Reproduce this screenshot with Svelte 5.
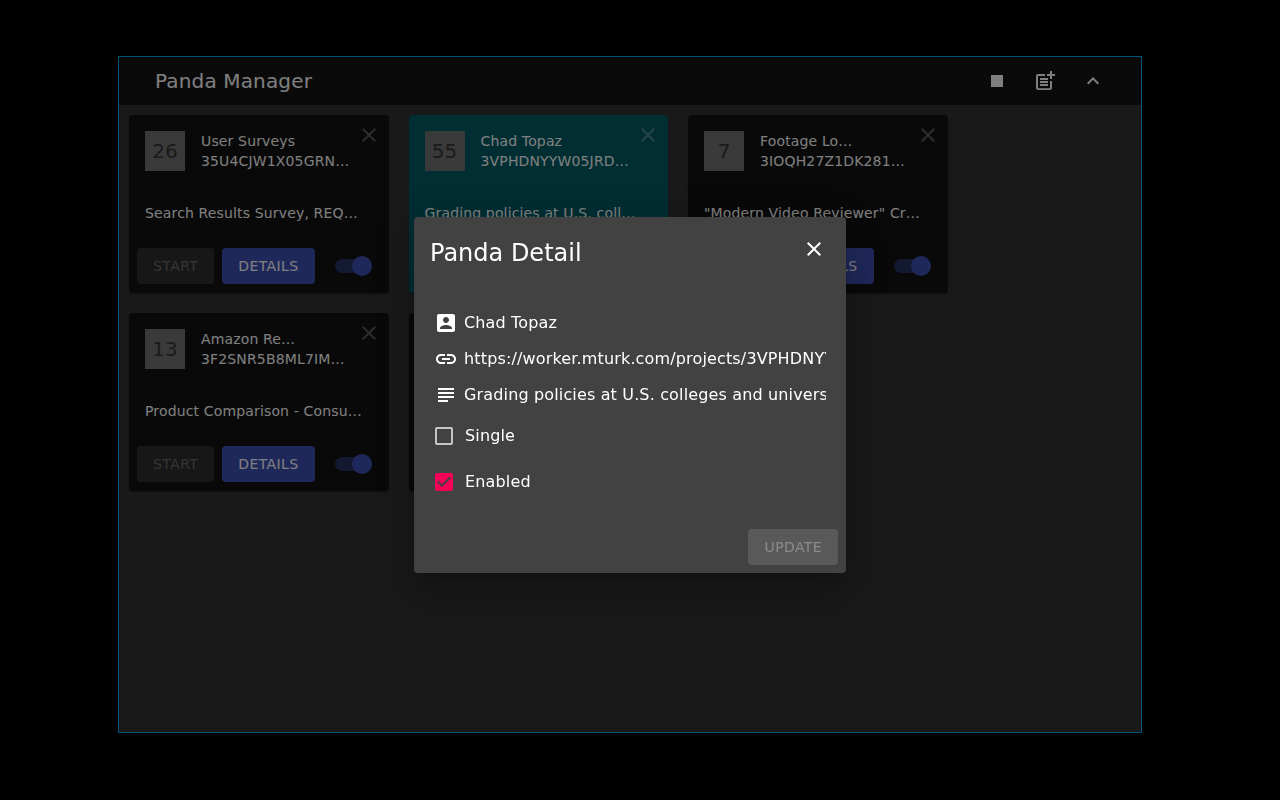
<script>
  const close = 'M19 6.41L17.59 5 12 10.59 6.41 5 5 6.41 10.59 12 5 17.59 6.41 19 12 13.41 17.59 19 19 17.59 13.41 12z';
  const pandas = [
    { count: 26, name: 'User Surveys', id: '35U4CJW1X05GRN…', title: 'Search Results Survey, REQ…' },
    { count: 55, name: 'Chad Topaz', id: '3VPHDNYYW05JRD…', title: 'Grading policies at U.S. coll…', active: true },
    { count: 7, name: 'Footage Lo…', id: '3IOQH27Z1DK281…', title: '"Modern Video Reviewer" Cr…' },
    { count: 13, name: 'Amazon Re…', id: '3F2SNR5B8ML7IM…', title: 'Product Comparison - Consu…' },
    {}
  ];
  const fields = [
    { text: 'Chad Topaz', icon: 'M3 5v14c0 1.1.89 2 2 2h14c1.1 0 2-.9 2-2V5c0-1.1-.9-2-2-2H5c-1.11 0-2 .9-2 2zm12 4c0 1.66-1.34 3-3 3s-3-1.34-3-3 1.34-3 3-3 3 1.34 3 3zm-9 8c0-2 4-3.1 6-3.1s6 1.1 6 3.1v1H6v-1z' },
    { text: 'https://worker.mturk.com/projects/3VPHDNYYW05JRD', icon: 'M3.9 12c0-1.71 1.39-3.1 3.1-3.1h4V7H7c-2.76 0-5 2.24-5 5s2.24 5 5 5h4v-1.9H7c-1.71 0-3.1-1.39-3.1-3.1zM8 13h8v-2H8v2zm9-6h-4v1.9h4c1.71 0 3.1 1.39 3.1 3.1s-1.39 3.1-3.1 3.1h-4V17h4c2.76 0 5-2.24 5-5s-2.24-5-5-5z' },
    { text: 'Grading policies at U.S. colleges and universities', icon: 'M4 5h16v2H4zm0 4h16v2H4zm0 4h16v2H4zm0 4h10v2H4z' }
  ];
</script>

<div class="window">
  <header>
    <h1>Panda Manager</h1>
    <div class="tools">
      <svg viewBox="0 0 24 24"><path d="M6 6h12v12H6z" /></svg>
      <svg viewBox="0 0 24 24"><path d="M17 19.22H5V7h7V5H5c-1.1 0-2 .9-2 2v12c0 1.1.9 2 2 2h12c1.1 0 2-.9 2-2v-7h-2v7.22z" /><path d="M19 2h-2v3h-3c.01.01 0 2 0 2h3v2.99c.01.01 2 0 2 0V7h3V5h-3V2zM7 9h8v2H7zM7 12v2h8v-2H7zM7 15h8v2H7z" /></svg>
      <svg viewBox="0 0 24 24"><path d="M7.41 15.41L12 10.83l4.59 4.58L18 14l-6-6-6 6z" /></svg>
    </div>
  </header>
  <main>
    {#each pandas as p}
      <article class:active={p.active}>
        {#if p.name}
          <div class="head">
            <div class="avatar">{p.count}</div>
            <div class="names"><div>{p.name}</div><div>{p.id}</div></div>
            <svg class="remove" viewBox="0 0 24 24"><path d={close} /></svg>
          </div>
          <p>{p.title}</p>
          <div class="actions">
            <button class="btn disabled" disabled>START</button>
            <button class="btn primary">DETAILS</button>
            <span class="switch"><i></i></span>
          </div>
        {/if}
      </article>
    {/each}
  </main>
</div>

<div class="backdrop">
  <section class="dialog">
    <div class="dialog-title">
      <h2>Panda Detail</h2>
      <svg viewBox="0 0 24 24"><path d={close} /></svg>
    </div>
    <div class="content">
      {#each fields as f}
        <div class="field"><svg viewBox="0 0 24 24"><path d={f.icon} /></svg><span>{f.text}</span></div>
      {/each}
      <div class="check">
        <svg class="off" viewBox="0 0 24 24"><path d="M19 5v14H5V5h14m0-2H5c-1.1 0-2 .9-2 2v14c0 1.1.9 2 2 2h14c1.1 0 2-.9 2-2V5c0-1.1-.9-2-2-2z" /></svg>
        <span>Single</span>
      </div>
      <div class="check">
        <svg class="on" viewBox="0 0 24 24"><path d="M19 3H5c-1.11 0-2 .9-2 2v14c0 1.1.89 2 2 2h14c1.11 0 2-.9 2-2V5c0-1.1-.89-2-2-2zm-9 14l-5-5 1.41-1.41L10 14.17l7.59-7.59L19 8l-9 9z" /></svg>
        <span>Enabled</span>
      </div>
    </div>
    <footer><button class="btn disabled" disabled>UPDATE</button></footer>
  </section>
</div>

<style>
  :global(body) { background: #000; overflow: hidden; }
  :global(#app) { font-family: "DejaVu Sans", sans-serif; color: #fff; }
  * { box-sizing: border-box; }
  h1, h2, p { margin: 0; font-weight: 400; }
  svg { width: 24px; height: 24px; fill: currentColor; flex: none; display: block; }
  .window { width: 1024px; height: 677px; margin: 56px 0 0 118px; border: 1px solid #00a8f4; background: #333; overflow: hidden; }
  header { height: 48px; background: #141414; display: flex; align-items: center; justify-content: space-between; padding: 0 36px; }
  h1 { font-size: 20px; line-height: 32px; letter-spacing: 0.0075em; }
  .tools { display: flex; gap: 24px; }
  main { display: grid; grid-template-columns: repeat(3, 259.5px); grid-auto-rows: 178px; gap: 20px; padding: 10px; }
  article { background: #121212; border-radius: 4px; overflow: hidden; box-shadow: 0 2px 1px -1px rgba(0,0,0,.2), 0 1px 1px rgba(0,0,0,.14), 0 1px 3px rgba(0,0,0,.12); }
  .active { background: #005c66; }
  .head { display: flex; padding: 16px 8px 16px 16px; font-size: 14px; line-height: 20px; letter-spacing: 0.01071em; white-space: nowrap; }
  .avatar { width: 40px; height: 40px; background: #757575; color: #363636; display: grid; place-items: center; font-size: 20px; letter-spacing: 0; margin-right: 16px; }
  .names { flex: 1; }
  .remove { color: rgba(255,255,255,.3); margin-top: -8px; }
  p { padding: 16px; font-size: 14px; line-height: 20px; letter-spacing: 0.01071em; white-space: nowrap; }
  .actions { display: flex; align-items: center; padding: 9px 8px 8px; gap: 8px; }
  .btn { border: 0; border-radius: 4px; height: 36px; padding: 0 16px; font: 14px/24px "DejaVu Sans", sans-serif; letter-spacing: 0.02857em; color: #fff; }
  .primary { background: #3f51b5; }
  .disabled { background: rgba(255,255,255,.12); color: rgba(255,255,255,.3); }
  .switch { width: 34px; height: 14px; border-radius: 7px; background: rgba(63,81,181,.5); margin-left: 12px; display: flex; align-items: center; justify-content: flex-end; }
  .switch i { width: 20px; height: 20px; flex: none; border-radius: 50%; background: #3f51b5; margin-right: -3px; }
  .backdrop { position: fixed; inset: 0; background: rgba(0,0,0,.5); display: flex; justify-content: center; align-items: center; padding: 0 20px 10px 0; }
  .dialog { width: 432px; height: 356px; border-radius: 4px; background: #424242; display: flex; flex-direction: column; box-shadow: 0 11px 15px -7px rgba(0,0,0,.2), 0 24px 38px 3px rgba(0,0,0,.14), 0 9px 46px 8px rgba(0,0,0,.12); }
  .dialog-title { display: flex; justify-content: space-between; padding: 20px 20px 0 16px; height: 88px; }
  h2 { font-size: 24px; line-height: 32px; }
  .content { padding: 0 20px; flex: 1; font-size: 16px; line-height: 24px; letter-spacing: 0.00938em; white-space: nowrap; }
  .field { display: flex; align-items: center; height: 36px; }
  .field span { margin-left: 6px; overflow: hidden; }
  .check { display: flex; align-items: center; height: 46px; gap: 9px; margin-left: -2px; }
  .off { color: rgba(255,255,255,.7); }
  .on { color: #f50057; }
  footer { display: flex; justify-content: flex-end; padding: 8px; }
</style>
